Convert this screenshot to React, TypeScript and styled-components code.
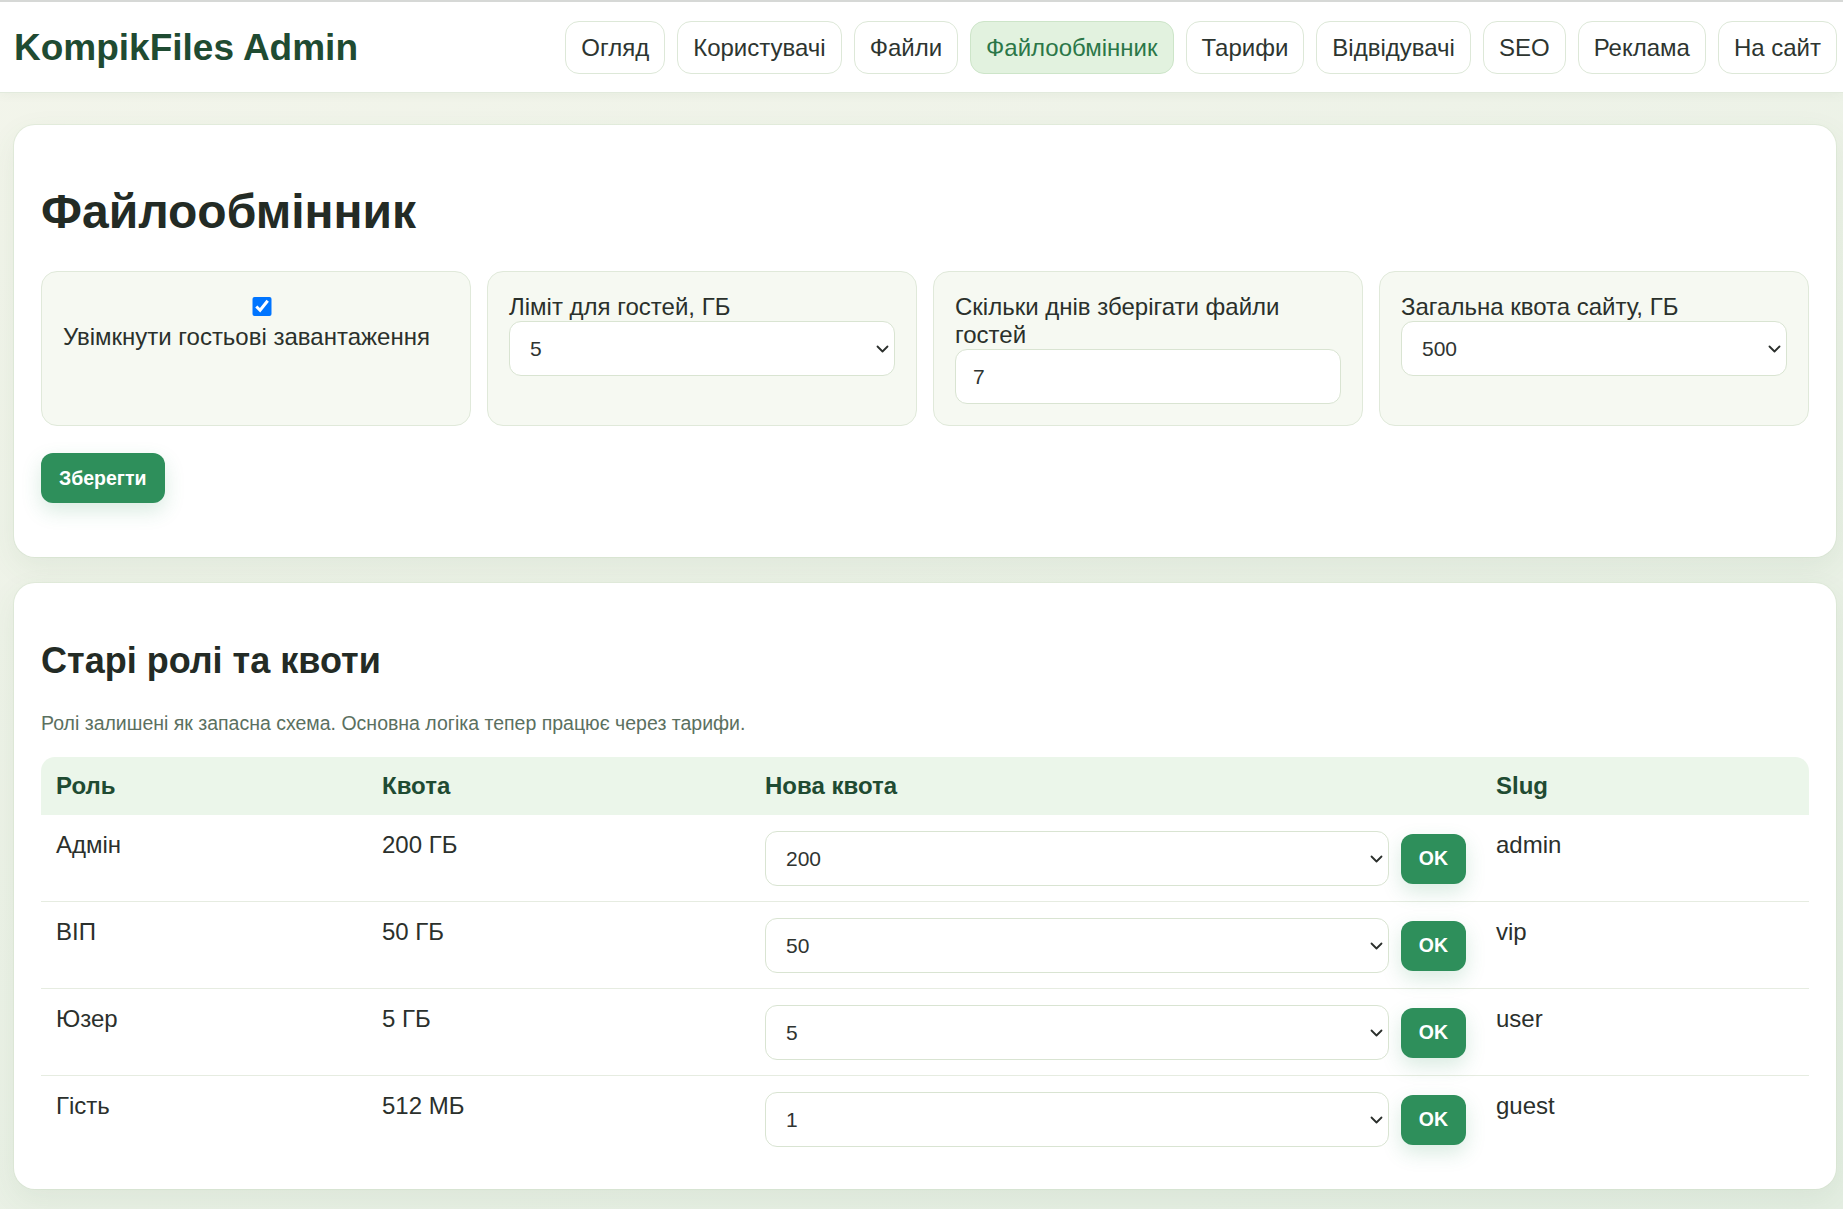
import React from 'react';
import styled, { createGlobalStyle } from 'styled-components';

const GlobalStyle = createGlobalStyle`
  * {
    box-sizing: border-box;
  }

  body {
    margin: 0;
    font-family: "Liberation Sans", Arial, sans-serif;
    color: #262d28;
    background: linear-gradient(160deg, #f3f5eb 0%, #e4eee2 100%);
    min-height: 100vh;
  }
`;

const Header = styled.header`
  display: flex;
  align-items: center;
  justify-content: space-between;
  background: #fff;
  border-top: 2px solid #d6d8d6;
  border-bottom: 1px solid #e2eadd;
  padding: 19px 6px 18px 14px;
  box-shadow: 0 2px 10px rgba(60, 90, 60, 0.05);
`;

const Logo = styled.div`
  font-size: 37px;
  font-weight: 700;
  color: #1f4b32;
`;

const Nav = styled.nav`
  display: flex;
  gap: 12px;
`;

const NavButton = styled.a<{ $active?: boolean }>`
  display: flex;
  align-items: center;
  height: 53px;
  padding: 0 15px;
  font-size: 24px;
  border-radius: 14px;
  text-decoration: none;
  cursor: pointer;
  border: 1px solid ${p => (p.$active ? '#cde5c9' : '#dde8d8')};
  background: ${p => (p.$active ? '#e2f2df' : '#fff')};
  color: ${p => (p.$active ? '#2b7748' : '#2d3530')};
`;

const Main = styled.main`
  display: flex;
  flex-direction: column;
  gap: 26px;
  padding: 32px 7px 20px 14px;
`;

const Card = styled.section`
  background: #fff;
  border-radius: 21px;
  padding: 27px;
  box-shadow: 0 10px 30px rgba(70, 110, 70, 0.08), 0 0 0 1px rgba(220, 232, 214, 0.6);
`;

const Title = styled.h1`
  font-size: 48px;
  font-weight: 700;
  color: #232b25;
  margin: 32px 0 32px;
`;

const SubTitle = styled.h2`
  font-size: 36px;
  font-weight: 700;
  color: #232b25;
  margin: 30px 0 30px;
`;

const Note = styled.p`
  font-size: 19.5px;
  color: #5b705f;
  margin: 0 0 22px;
`;

const FieldGrid = styled.div`
  display: grid;
  grid-template-columns: repeat(4, 1fr);
  gap: 16px;
`;

const FieldBox = styled.label`
  display: block;
  background: #f6f9f2;
  border: 1px solid #e0e9da;
  border-radius: 16px;
  padding: 21px;
  font-size: 24px;
  color: #2a302b;
`;

const Check = styled.input`
  display: block;
  width: 100%;
  height: 19px;
  margin: 4px 0 7px 6px;
`;

const SelectWrap = styled.div`
  position: relative;
  flex: 1;
  min-width: 0;

  svg {
    position: absolute;
    right: 6px;
    top: 50%;
    margin-top: -4px;
    pointer-events: none;
  }
`;

const Select = styled.select`
  display: block;
  width: 100%;
  height: 55px;
  padding: 0 30px 0 20px;
  font-family: inherit;
  font-size: 21px;
  color: #2f3431;
  background: #fff;
  border: 1px solid #d9e4d2;
  border-radius: 12px;
  appearance: none;
  -webkit-appearance: none;
`;

const TextInput = styled.input`
  display: block;
  width: 100%;
  height: 55px;
  padding: 0 17px;
  font-family: inherit;
  font-size: 21px;
  color: #2f3431;
  background: #fff;
  border: 1px solid #d9e4d2;
  border-radius: 12px;
`;

const Actions = styled.div`
  margin: 27px 0 27px;
`;

const GreenButton = styled.button`
  height: 50px;
  padding: 0 18px;
  font-family: inherit;
  font-size: 19.5px;
  font-weight: 700;
  color: #fff;
  background: #2e8f5b;
  border: none;
  border-radius: 12px;
  cursor: pointer;
  flex-shrink: 0;
  box-shadow: 0 8px 20px rgba(46, 143, 91, 0.18);
`;

const Table = styled.table`
  width: 100%;
  border-collapse: separate;
  border-spacing: 0;
  table-layout: fixed;
  font-size: 24px;

  th {
    text-align: left;
    font-weight: 700;
    color: #1f4b32;
    background: #ebf6ea;
    padding: 15px;

    &:first-child {
      border-top-left-radius: 14px;
    }

    &:last-child {
      border-top-right-radius: 14px;
    }
  }

  td {
    vertical-align: top;
    padding: 16px 15px 15px;
    color: #2b302c;
    border-bottom: 1px solid #e6ece1;
  }

  tbody tr:last-child td {
    border-bottom: none;
  }
`;

const QuotaCell = styled.div`
  display: flex;
  align-items: center;
  gap: 12px;
`;

const Chevron = () => (
  <svg width="13" height="8" viewBox="0 0 13 8" fill="none">
    <path d="M1.5 1.5 L6.5 6.5 L11.5 1.5" stroke="#2b2f2c" strokeWidth="1.8" strokeLinecap="round" strokeLinejoin="round" />
  </svg>
);

const quotaOptions = ['1', '5', '10', '50', '100', '200', '500', '1000'];

const QuotaSelect = ({ value }: { value: string }): JSX.Element => (
  <SelectWrap>
    <Select defaultValue={value}>
      {quotaOptions.map(o => (
        <option key={o} value={o}>{o}</option>
      ))}
    </Select>
    <Chevron />
  </SelectWrap>
);

const roles = [
  { name: 'Адмін', quota: '200 ГБ', value: '200', slug: 'admin' },
  { name: 'ВІП', quota: '50 ГБ', value: '50', slug: 'vip' },
  { name: 'Юзер', quota: '5 ГБ', value: '5', slug: 'user' },
  { name: 'Гість', quota: '512 МБ', value: '1', slug: 'guest' },
];

const navItems = [
  'Огляд',
  'Користувачі',
  'Файли',
  'Файлообмінник',
  'Тарифи',
  'Відвідувачі',
  'SEO',
  'Реклама',
  'На сайт',
];

const App = (): JSX.Element => {
  return (
    <>
      <GlobalStyle />
      <Header>
        <Logo>KompikFiles Admin</Logo>
        <Nav>
          {navItems.map(item => (
            <NavButton key={item} $active={item === 'Файлообмінник'}>
              {item}
            </NavButton>
          ))}
        </Nav>
      </Header>

      <Main>
        <Card>
          <Title>Файлообмінник</Title>
          <FieldGrid>
            <FieldBox>
              <Check type="checkbox" defaultChecked />
              Увімкнути гостьові завантаження
            </FieldBox>
            <FieldBox>
              Ліміт для гостей, ГБ
              <QuotaSelect value="5" />
            </FieldBox>
            <FieldBox>
              Скільки днів зберігати файли гостей
              <TextInput type="text" defaultValue="7" />
            </FieldBox>
            <FieldBox>
              Загальна квота сайту, ГБ
              <QuotaSelect value="500" />
            </FieldBox>
          </FieldGrid>
          <Actions>
            <GreenButton>Зберегти</GreenButton>
          </Actions>
        </Card>

        <Card>
          <SubTitle>Старі ролі та квоти</SubTitle>
          <Note>Ролі залишені як запасна схема. Основна логіка тепер працює через тарифи.</Note>
          <Table>
            <colgroup>
              <col style={{ width: 326 }} />
              <col style={{ width: 383 }} />
              <col style={{ width: 731 }} />
              <col />
            </colgroup>
            <thead>
              <tr>
                <th>Роль</th>
                <th>Квота</th>
                <th>Нова квота</th>
                <th>Slug</th>
              </tr>
            </thead>
            <tbody>
              {roles.map(r => (
                <tr key={r.slug}>
                  <td>{r.name}</td>
                  <td>{r.quota}</td>
                  <td>
                    <QuotaCell>
                      <QuotaSelect value={r.value} />
                      <GreenButton>OK</GreenButton>
                    </QuotaCell>
                  </td>
                  <td>{r.slug}</td>
                </tr>
              ))}
            </tbody>
          </Table>
        </Card>
      </Main>
    </>
  );
};

export default App;
